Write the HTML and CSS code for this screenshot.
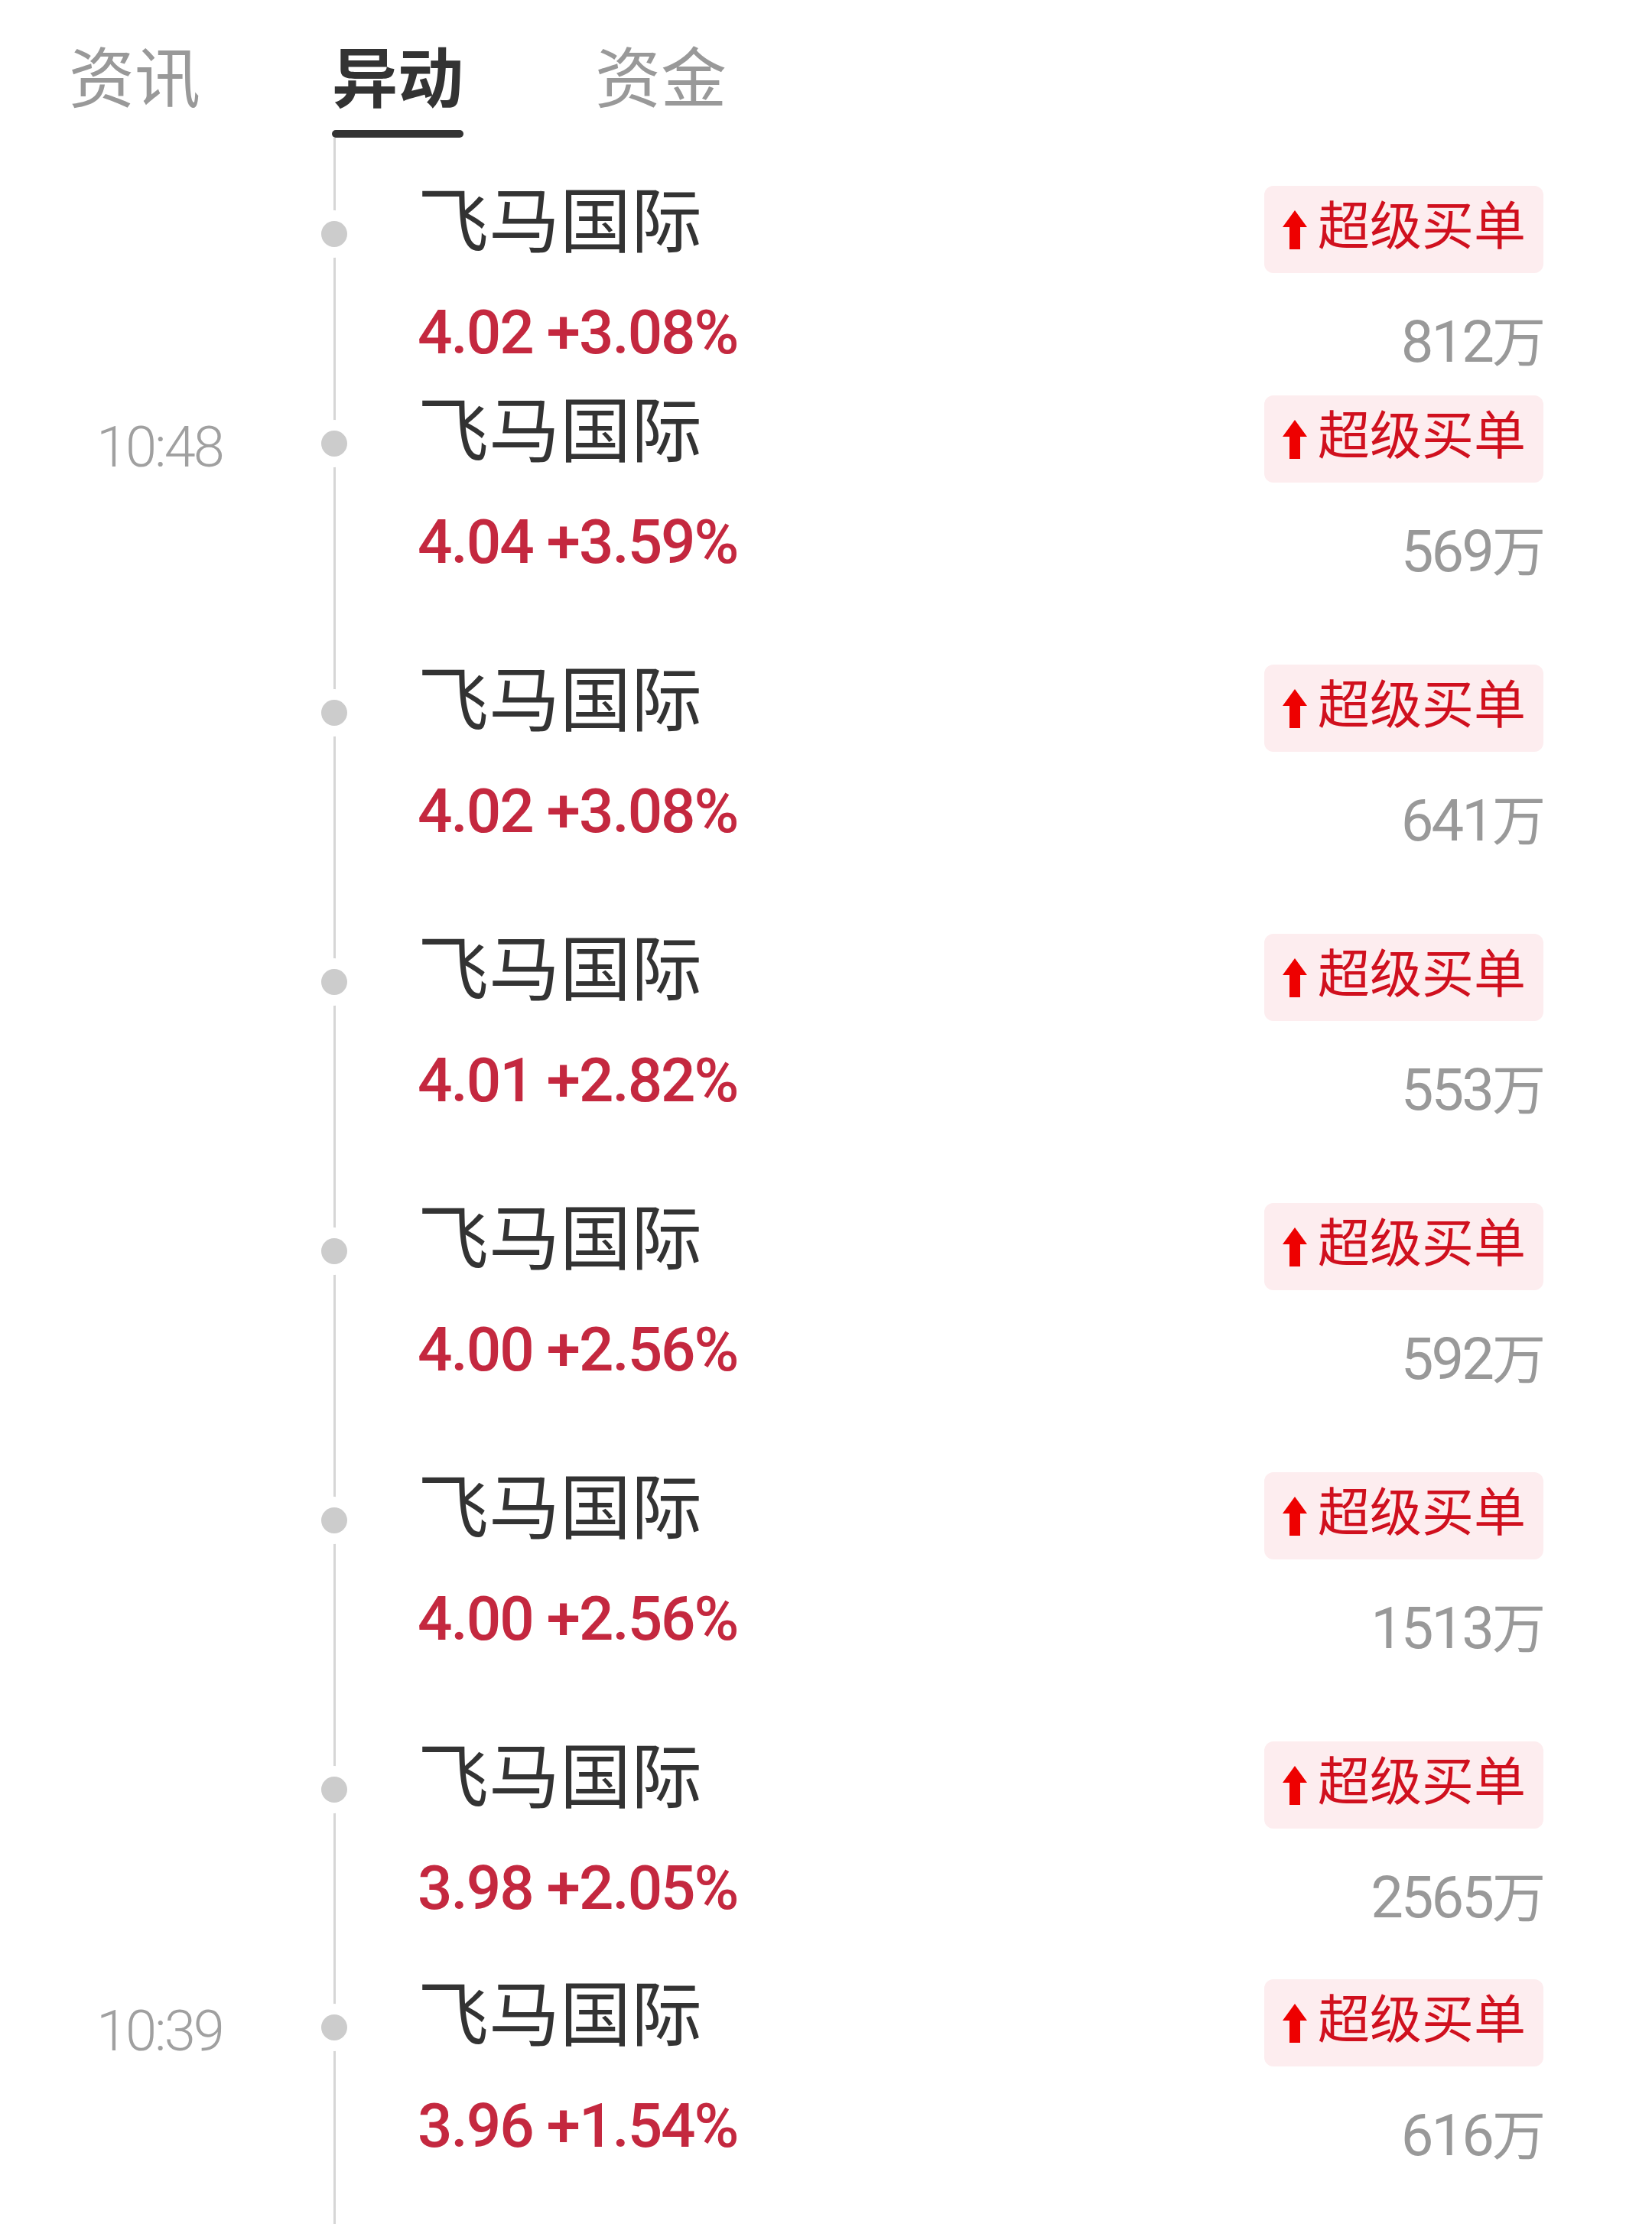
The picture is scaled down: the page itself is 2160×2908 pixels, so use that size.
FILE: index.html
```html
<!DOCTYPE html>
<html lang="zh-CN">
  <head>
    <meta charset="UTF-8" />
    <meta name="viewport" content="width=device-width, initial-scale=1.0" />
    <title>异动</title>
    <link rel="stylesheet" href="styles.css">
  </head>
  <body>
    <header class="tabs">
      <span class="tab">资讯</span>
      <span class="tab active">异动</span>
      <span class="tab">资金</span>
    </header>

    <ul class="feed">
      <li class="item short">
        <span class="time"></span>
        <span class="axis"><i class="dot"></i></span>
        <div class="card">
          <div class="top">
            <span class="name">飞马国际</span>
            <span class="badge"><svg class="arrow" viewBox="0 0 32 51"><path d="M16 0L32 22H23V51H9V22H0Z"/></svg><span class="badge-text">超级买单</span></span>
          </div>
          <div class="bottom">
            <span class="price">4.02 +3.08%</span>
            <span class="amount">812<span class="unit">万</span></span>
          </div>
        </div>
      </li>

      <li class="item">
        <span class="time">10:48</span>
        <span class="axis"><i class="dot"></i></span>
        <div class="card">
          <div class="top">
            <span class="name">飞马国际</span>
            <span class="badge"><svg class="arrow" viewBox="0 0 32 51"><path d="M16 0L32 22H23V51H9V22H0Z"/></svg><span class="badge-text">超级买单</span></span>
          </div>
          <div class="bottom">
            <span class="price">4.04 +3.59%</span>
            <span class="amount">569<span class="unit">万</span></span>
          </div>
        </div>
      </li>

      <li class="item">
        <span class="time"></span>
        <span class="axis"><i class="dot"></i></span>
        <div class="card">
          <div class="top">
            <span class="name">飞马国际</span>
            <span class="badge"><svg class="arrow" viewBox="0 0 32 51"><path d="M16 0L32 22H23V51H9V22H0Z"/></svg><span class="badge-text">超级买单</span></span>
          </div>
          <div class="bottom">
            <span class="price">4.02 +3.08%</span>
            <span class="amount">641<span class="unit">万</span></span>
          </div>
        </div>
      </li>

      <li class="item">
        <span class="time"></span>
        <span class="axis"><i class="dot"></i></span>
        <div class="card">
          <div class="top">
            <span class="name">飞马国际</span>
            <span class="badge"><svg class="arrow" viewBox="0 0 32 51"><path d="M16 0L32 22H23V51H9V22H0Z"/></svg><span class="badge-text">超级买单</span></span>
          </div>
          <div class="bottom">
            <span class="price">4.01 +2.82%</span>
            <span class="amount">553<span class="unit">万</span></span>
          </div>
        </div>
      </li>

      <li class="item">
        <span class="time"></span>
        <span class="axis"><i class="dot"></i></span>
        <div class="card">
          <div class="top">
            <span class="name">飞马国际</span>
            <span class="badge"><svg class="arrow" viewBox="0 0 32 51"><path d="M16 0L32 22H23V51H9V22H0Z"/></svg><span class="badge-text">超级买单</span></span>
          </div>
          <div class="bottom">
            <span class="price">4.00 +2.56%</span>
            <span class="amount">592<span class="unit">万</span></span>
          </div>
        </div>
      </li>

      <li class="item">
        <span class="time"></span>
        <span class="axis"><i class="dot"></i></span>
        <div class="card">
          <div class="top">
            <span class="name">飞马国际</span>
            <span class="badge"><svg class="arrow" viewBox="0 0 32 51"><path d="M16 0L32 22H23V51H9V22H0Z"/></svg><span class="badge-text">超级买单</span></span>
          </div>
          <div class="bottom">
            <span class="price">4.00 +2.56%</span>
            <span class="amount">1513<span class="unit">万</span></span>
          </div>
        </div>
      </li>

      <li class="item mid">
        <span class="time"></span>
        <span class="axis"><i class="dot"></i></span>
        <div class="card">
          <div class="top">
            <span class="name">飞马国际</span>
            <span class="badge"><svg class="arrow" viewBox="0 0 32 51"><path d="M16 0L32 22H23V51H9V22H0Z"/></svg><span class="badge-text">超级买单</span></span>
          </div>
          <div class="bottom">
            <span class="price">3.98 +2.05%</span>
            <span class="amount">2565<span class="unit">万</span></span>
          </div>
        </div>
      </li>

      <li class="item">
        <span class="time">10:39</span>
        <span class="axis"><i class="dot"></i></span>
        <div class="card">
          <div class="top">
            <span class="name">飞马国际</span>
            <span class="badge"><svg class="arrow" viewBox="0 0 32 51"><path d="M16 0L32 22H23V51H9V22H0Z"/></svg><span class="badge-text">超级买单</span></span>
          </div>
          <div class="bottom">
            <span class="price">3.96 +1.54%</span>
            <span class="amount">616<span class="unit">万</span></span>
          </div>
        </div>
      </li>
    </ul>
  </body>
</html>
```

FILE: styles.css
```css
* {
  margin: 0;
  padding: 0;
  box-sizing: border-box;
}

body {
  background: #ffffff;
  font-family: "Noto Sans CJK SC", sans-serif;
  color: #333333;
}

/* tabs */
.tabs {
  display: flex;
  gap: 172px;
  height: 180px;
  padding: 54px 0 0 90px;
}

.tab {
  font-size: 86px;
  line-height: 86px;
  color: #999999;
}

.tab.active {
  color: #333333;
  font-weight: 700;
}

.tab.active::after {
  content: "";
  display: block;
  height: 10px;
  margin-top: 30px;
  border-radius: 5px;
  background: #333333;
}

/* timeline */
.feed {
  list-style: none;
  display: flex;
  flex-direction: column;
  min-height: calc(100vh - 180px);
  padding-top: 63px;
  background: linear-gradient(#d6d6d6, #d6d6d6) no-repeat 436px 0 / 3px 100%;
}

.item {
  display: grid;
  grid-template-columns: 400px 74px 1fr;
  height: 352px;
  flex: none;
}

.item.short {
  height: 274px;
}

.item.mid {
  height: 311px;
}

.item:last-child {
  flex: 1;
}

.time {
  padding: 31px 0 0 126px;
  font-family: Roboto, sans-serif;
  font-weight: 300;
  font-size: 74px;
  line-height: 74px;
  letter-spacing: -3px;
  color: #a0a0a0;
}

.axis {
  display: flex;
  justify-content: center;
  padding-top: 46px;
}

.dot {
  width: 34px;
  height: 34px;
  border-radius: 50%;
  background: #cccccc;
  box-shadow: 0 0 0 14px #ffffff;
}

.card {
  padding: 0 142px 0 72px;
}

.top {
  display: flex;
  justify-content: space-between;
  align-items: flex-start;
}

.name {
  margin-top: -5px;
  font-size: 93px;
  line-height: 90px;
  color: #333333;
}

.badge {
  display: flex;
  align-items: center;
  width: 365px;
  height: 114px;
  padding-left: 24px;
  border-radius: 12px;
  background: #fdedef;
}

.arrow {
  width: 32px;
  height: 51px;
  fill: #ee0000;
}

.badge-text {
  margin: 0 0 18px 14px;
  font-size: 68px;
  line-height: 68px;
  color: #d0101e;
}

.bottom {
  display: flex;
  justify-content: space-between;
  align-items: flex-start;
}

.price {
  margin-top: 38px;
  font-family: Roboto, "Noto Sans CJK SC", sans-serif;
  font-weight: 500;
  font-size: 80px;
  line-height: 80px;
  letter-spacing: -2px;
  color: #c4283f;
}

.amount {
  margin: 48px -3px 0 0;
  font-family: Roboto, "Noto Sans CJK SC", sans-serif;
  font-size: 76px;
  line-height: 76px;
  letter-spacing: -3px;
  color: #999999;
}

.unit {
  font-family: "Noto Sans CJK SC", sans-serif;
  font-size: 70px;
  letter-spacing: 0;
}
```
